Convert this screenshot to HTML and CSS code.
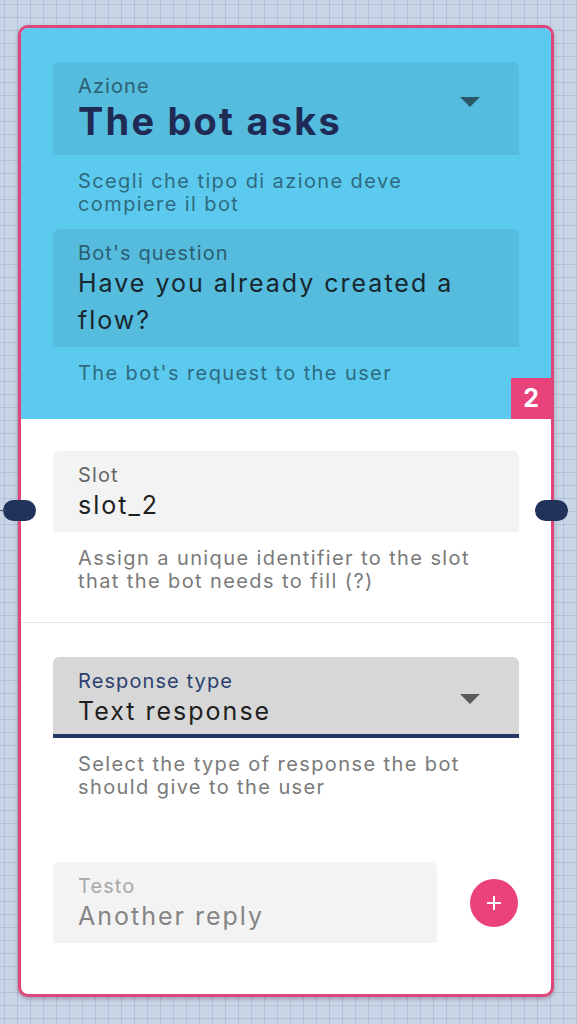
FILE: index.html
```html
<!DOCTYPE html>
<html lang="en">
<head>
    <meta charset="UTF-8">
    <meta name="viewport" content="width=device-width, initial-scale=1.0">
    <title>Bot flow - node 2</title>
    <link rel="stylesheet" href="styles.css">
</head>
<body>

    <div class="node">
        <span class="handle handle-in"></span>
        <span class="handle handle-out"></span>

        <section class="node-head">
            <div class="field field-select">
                <div class="field-label">Azione</div>
                <div class="field-value field-title">The bot asks</div>
                <span class="arrow"></span>
            </div>
            <p class="helper">Scegli che tipo di azione deve<br>compiere il bot</p>

            <div class="field">
                <div class="field-label">Bot's question</div>
                <div class="field-value">Have you already created a flow?</div>
            </div>
            <p class="helper helper-last">The bot's request to the user</p>

            <span class="badge">2</span>
        </section>

        <section class="node-part">
            <div class="field">
                <div class="field-label">Slot</div>
                <div class="field-value">slot_2</div>
            </div>
            <p class="helper">Assign a unique identifier to the slot<br>that the bot needs to fill (?)</p>
        </section>

        <section class="node-part node-part-last">
            <div class="field field-select field-active">
                <div class="field-label">Response type</div>
                <div class="field-value">Text response</div>
                <span class="arrow"></span>
            </div>
            <p class="helper">Select the type of response the bot<br>should give to the user</p>

            <div class="reply-row">
                <div class="field field-disabled">
                    <div class="field-label">Testo</div>
                    <div class="field-value">Another reply</div>
                </div>
                <button class="add-btn" aria-label="Add reply">
                    <svg width="18" height="18" viewBox="0 0 18 18">
                        <path d="M9 2v14M2 9h14" stroke="#fff" stroke-width="2" fill="none"/>
                    </svg>
                </button>
            </div>
        </section>
    </div>

</body>
</html>
```

FILE: styles.css
```css
body {
    margin: 0;
    min-height: 1024px;
    font-family: Inter, "Noto Sans", sans-serif;
    background-color: #c8d5e6;
    background-image:
        linear-gradient(90deg, rgba(90, 110, 145, 0.18) 1px, transparent 1px),
        linear-gradient(rgba(90, 110, 145, 0.18) 1px, transparent 1px);
    background-size: 13px 13px;
    background-position: 4px 4px;
    padding-top: 25px;
    box-sizing: border-box;
}

.node {
    position: relative;
    margin-left: 18px;
    width: 530px;
    background: #fff;
    border: 3px solid #e0467c;
    border-radius: 10px;
    box-shadow: 0 2px 4px rgba(60, 20, 50, 0.3);
}

/* connection handles on the sides */
.handle {
    position: absolute;
    top: 472px;
    width: 33px;
    height: 21px;
    border-radius: 11px;
    background: #22335b;
    z-index: 2;
}

.handle-in {
    left: -18px;
}

.handle-in::before {
    content: "";
    position: absolute;
    left: -3px;
    top: 10px;
    width: 6px;
    height: 1px;
    background: #4a5570;
}

.handle-out {
    right: -17px;
}

.node-head {
    position: relative;
    background: #5ccaee;
    border-radius: 7px 7px 0 0;
    padding: 34px 32px 34px;
}

.node-part {
    padding: 32px 32px 29px;
    border-bottom: 1px solid #e3e3e3;
}

.node-part-last {
    padding-top: 34px;
    padding-bottom: 51px;
    border-bottom: none;
}

/* text fields */
.field {
    position: relative;
    background: #f3f3f3;
    border-radius: 6px 6px 0 0;
    padding: 12px 25px 8px;
}

.node-head .field {
    background: rgba(0, 0, 0, 0.065);
}

.field-label {
    font-size: 20px;
    line-height: 24px;
    color: #666;
    letter-spacing: 1.1px;
}

.node-head .field-label {
    color: #2c5f72;
}

.field-value {
    font-size: 25px;
    line-height: 37px;
    color: #1f1f1f;
    letter-spacing: 2px;
}

.node-head .field-value {
    color: #17272d;
}

.node-head .field-title {
    font-size: 38px;
    line-height: 46px;
    font-weight: 700;
    color: #1f2b55;
    letter-spacing: 2.2px;
    margin-bottom: 3px;
}

.arrow {
    position: absolute;
    top: 35px;
    right: 39px;
    width: 0;
    height: 0;
    border-left: 10.5px solid transparent;
    border-right: 10.5px solid transparent;
    border-top: 10px solid #2a5667;
}

.field-active {
    background: #d7d7d7;
    border-bottom: 4px solid #243665;
    padding-bottom: 4px;
}

.field-active .field-label {
    color: #2c4170;
}

.field-active .arrow {
    top: 37px;
    border-top-color: #5a5a5a;
}

.field-disabled .field-label {
    color: #a8a8a8;
}

.field-disabled .field-value {
    color: #858585;
}

.helper {
    margin: 15px 25px 13px;
    font-size: 20px;
    line-height: 23px;
    color: #7a7a7a;
    letter-spacing: 1.4px;
}

.node-head .helper {
    color: #2e6b81;
}

.helper-last {
    margin-bottom: 0;
}

.node-part .helper {
    margin-bottom: 0;
}

.badge {
    position: absolute;
    right: 0;
    bottom: 0;
    width: 40px;
    height: 41px;
    background: #e8447b;
    color: #fff;
    font-size: 25px;
    font-weight: 700;
    line-height: 41px;
    text-align: center;
}

.reply-row {
    display: flex;
    align-items: center;
    gap: 33px;
    margin-top: 63px;
}

.reply-row .field {
    width: 334px;
}

.add-btn {
    width: 48px;
    height: 48px;
    border: none;
    border-radius: 50%;
    background: #ea4279;
    display: flex;
    align-items: center;
    justify-content: center;
    padding: 0;
    cursor: pointer;
}
```
